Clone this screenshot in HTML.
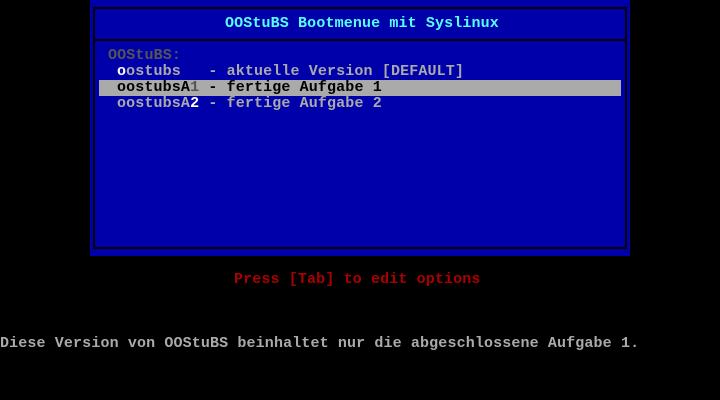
<!DOCTYPE html>
<html><head><style>
body{margin:0;width:720px;height:400px;background:#000;overflow:hidden;position:relative;font-family:"Liberation Mono","DejaVu Sans Mono",monospace;font-size:15px;font-weight:bold;letter-spacing:0.13px;}
.t{position:absolute;white-space:pre;line-height:16px;height:16px;z-index:2;}
.box{position:absolute;left:90px;top:0;width:540px;height:256px;background:#0000aa;}
.frame{position:absolute;left:93px;top:7px;width:530px;height:238px;border:2px solid #000;z-index:1;}
.sep{position:absolute;left:93px;top:39px;width:534px;height:2px;background:#000;z-index:1;}
</style></head><body>
<div class="box"></div>
<div class="frame"></div>
<div class="sep"></div>
<div class="t" style="left:225px;top:16px;color:#55ffff">OOStuBS Bootmenue mit Syslinux</div>
<div class="t" style="left:108px;top:48px;color:#555">OOStuBS:</div>
<div class="t" style="left:117px;top:64px;color:#aaa"><span style="color:#fff">o</span>ostubs   - aktuelle Version [DEFAULT]</div>
<div style="position:absolute;left:99px;top:80px;width:522px;height:16px;background:#aaa;z-index:1"></div>
<div class="t" style="left:117px;top:80px;color:#000">oostubsA<span style="color:#555">1</span> - fertige Aufgabe 1</div>
<div class="t" style="left:117px;top:96px;color:#aaa">oostubsA<span style="color:#fff">2</span> - fertige Aufgabe 2</div>
<div class="t" style="left:234px;top:272px;color:#aa0000">Press [Tab] to edit options</div>
<div class="t" style="left:0;top:336px;color:#aaa">Diese Version von OOStuBS beinhaltet nur die abgeschlossene Aufgabe 1.</div>
</body></html>
